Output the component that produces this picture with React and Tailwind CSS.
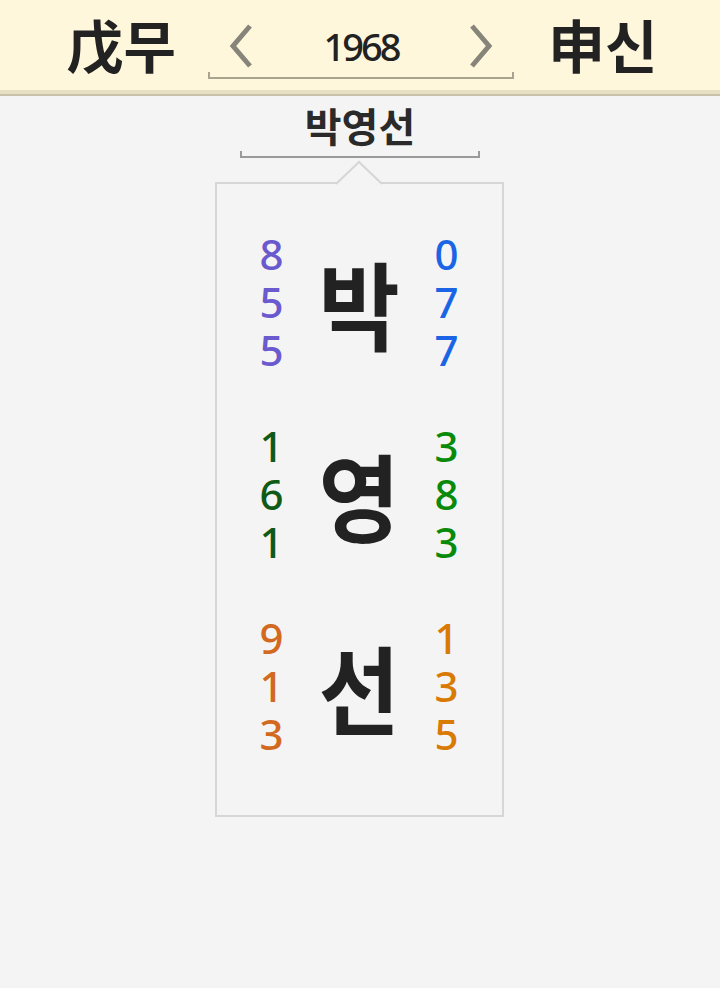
import React from "react";

const KR = { fontFamily: '"Noto Sans CJK KR", "Noto Sans", sans-serif' };
const NUM = { fontFamily: '"Noto Sans", "DejaVu Sans", sans-serif' };

const rows = [
  { char: "박", left: ["8", "5", "5"], right: ["0", "7", "7"], lc: "text-[#6a5acd]", rc: "text-[#1c64e6]" },
  { char: "영", left: ["1", "6", "1"], right: ["3", "8", "3"], lc: "text-[#0f5a16]", rc: "text-[#0a8a0a]" },
  { char: "선", left: ["9", "1", "3"], right: ["1", "3", "5"], lc: "text-[#d2691e]", rc: "text-[#d97a04]" },
];

const Chevron = ({ dir }) => (
  <svg width="26" height="44" viewBox="0 0 26 44">
    <polyline
      points={dir === "left" ? "22,2 5,22 22,42" : "4,2 21,22 4,42"}
      fill="none"
      stroke="#87857a"
      strokeWidth="5"
    />
  </svg>
);

const Digits = ({ items, color }) => (
  <div className={`w-[110px] flex flex-col items-center text-[42px] font-medium ${color}`} style={NUM}>
    {items.map((d, i) => (
      <span key={i} className="block h-[48px] leading-[48px]">
        {d}
      </span>
    ))}
  </div>
);

export default function App() {
  return (
    <div className="w-[720px] min-h-[988px] bg-[#f4f4f4]" style={KR}>
      {/* header */}
      <div className="h-[90px] bg-[#fff7dc] flex items-center justify-center pl-[4px] text-[#222]">
        <div className="text-[57px] font-bold leading-none -mt-[4px]">戊무</div>
        <div className="w-[306px] flex flex-col mt-[8px] ml-[32px] mr-[34px]">
          <div className="flex items-center justify-between px-[20px] h-[52px]">
            <Chevron dir="left" />
            <span className="text-[38px] font-medium tracking-[-3px] leading-none text-[#222]" style={NUM}>
              1968
            </span>
            <Chevron dir="right" />
          </div>
          <div className="h-[7px] border-x-2 border-b-2 border-[#a8a490]" />
        </div>
        <div className="text-[57px] font-bold leading-none -mt-[4px]">申신</div>
      </div>
      <div className="h-[4px] bg-[#e8e0c2]" />
      <div className="h-[2px] bg-[#c9c1aa]" />

      {/* name */}
      <div className="flex flex-col items-center">
        <div className="text-[40px] font-bold leading-none text-[#2a2a2a] mt-[9px]">박영선</div>
        <div className="w-[240px] h-[7px] border-x-2 border-b-2 border-[#9a9a9a] mt-[6px]" />

        <div className="relative mt-[24px] w-[289px] h-[635px] border-2 border-[#d6d6d6] pt-[46px] -translate-x-[1px]">
          <svg
            className="absolute left-[118px] -top-[24px]"
            width="48"
            height="26"
            viewBox="0 0 48 26"
          >
            <polygon points="1,24 24,2 47,24" fill="#f4f4f4" />
            <polyline points="1,24 24,2 47,24" fill="none" stroke="#d6d6d6" strokeWidth="2" />
          </svg>
          <div className="flex flex-col gap-[48px]">
            {rows.map((r) => (
              <div key={r.char} className="flex items-center">
                <Digits items={r.left} color={r.lc} />
                <div className="w-[65px] flex justify-center text-[96px] font-bold leading-none text-[#222]">
                  <span className="inline-block scale-x-[0.92]">{r.char}</span>
                </div>
                <Digits items={r.right} color={r.rc} />
              </div>
            ))}
          </div>
        </div>
      </div>
    </div>
  );
}
